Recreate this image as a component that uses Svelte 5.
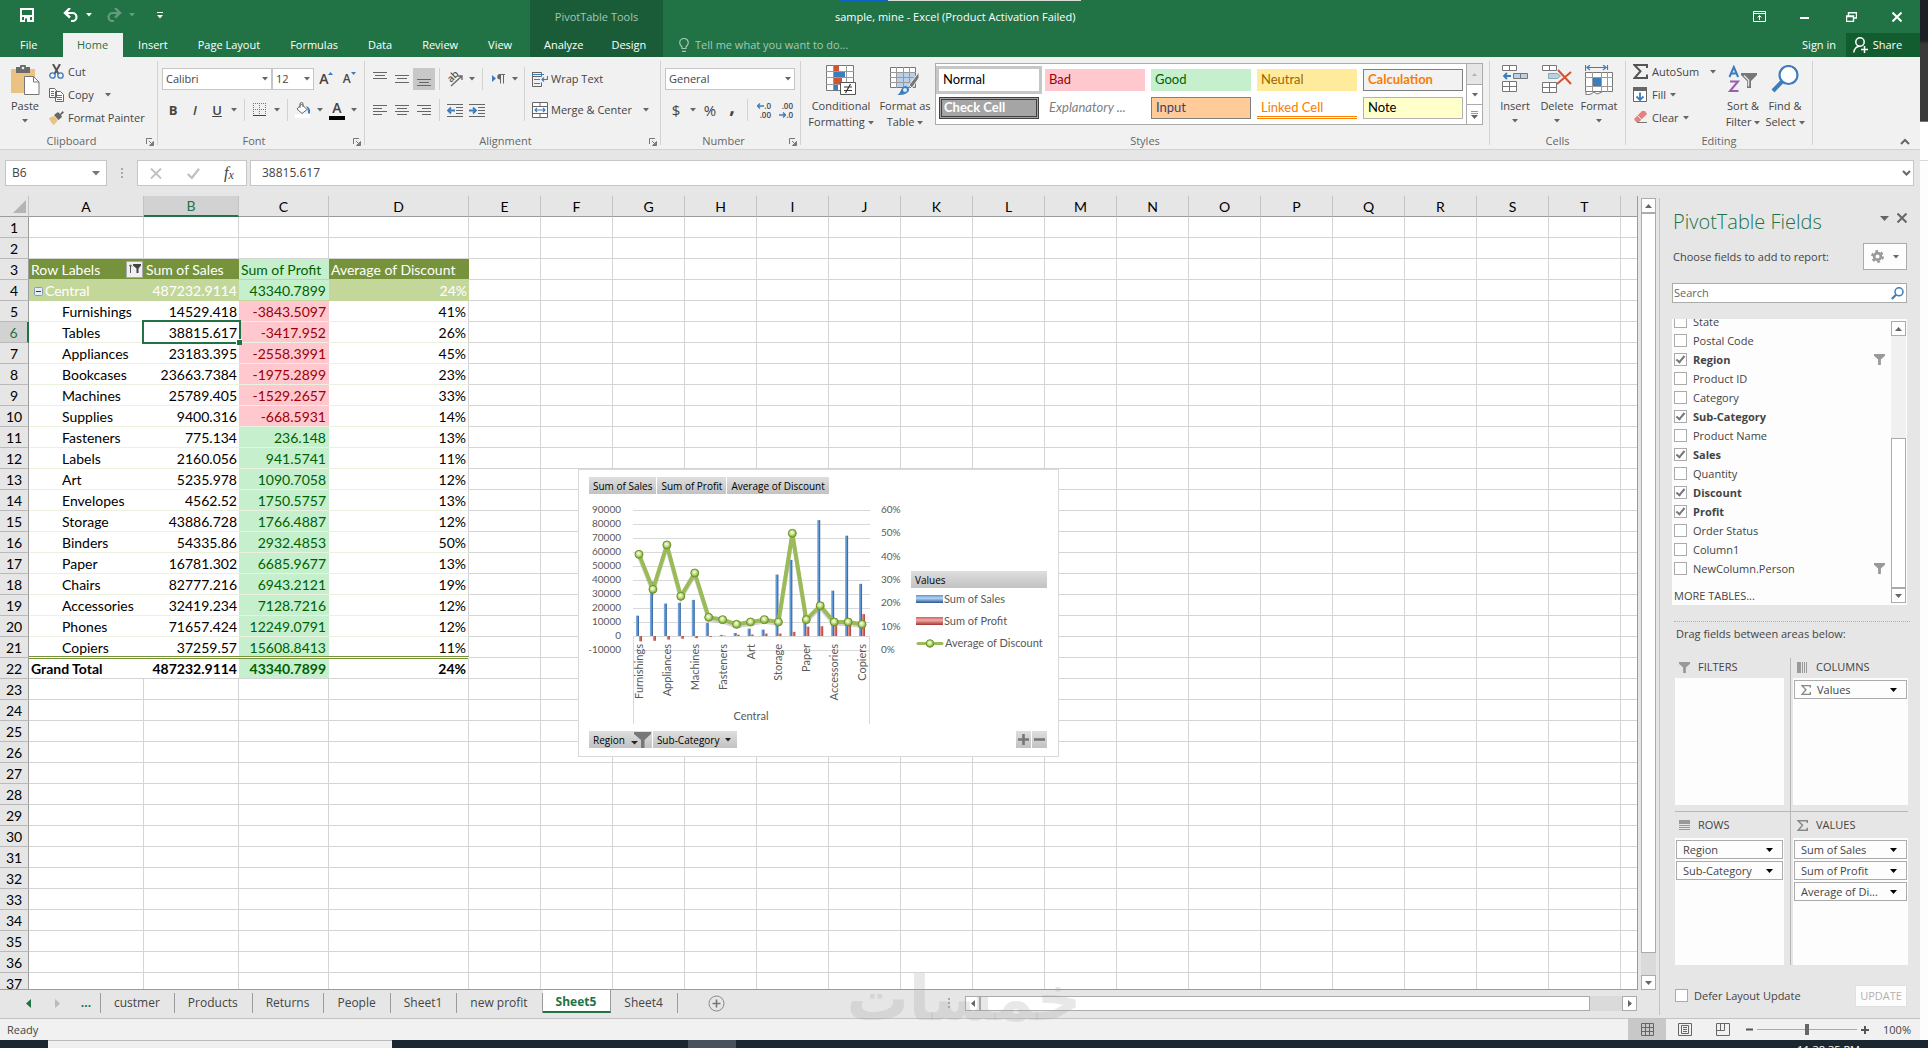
<script>
  let nameBox = $state('B6')
  let formula = $state('38815.617')
  let search = $state('')
  let tellMe = $state('')
  let zoom = $state(50)
  let defer = $state(false)
  let activeSheet = $state('Sheet5')

  const tabs = ['Home', 'Insert', 'Page Layout', 'Formulas', 'Data', 'Review', 'View']
  const sheets = ['custmer', 'Products', 'Returns', 'People', 'Sheet1', 'new profit', 'Sheet5', 'Sheet4']

  const columns = [
    { name: 'A', width: 115 },
    { name: 'B', width: 95 },
    { name: 'C', width: 90 },
    { name: 'D', width: 140 },
    ...'EFGHIJKLMNOPQRST'.split('').map(name => ({ name, width: 72 })),
    { name: '', width: 72 }
  ]
  const tableWidth = 29 + columns.reduce((sum, c) => sum + c.width, 0)
  const emptyColumns = columns.slice(4)

  const items = [
    { name: 'Furnishings', sales: 14529.418, profit: -3843.5097, discount: 41 },
    { name: 'Tables', sales: 38815.617, profit: -3417.952, discount: 26 },
    { name: 'Appliances', sales: 23183.395, profit: -2558.3991, discount: 45 },
    { name: 'Bookcases', sales: 23663.7384, profit: -1975.2899, discount: 23 },
    { name: 'Machines', sales: 25789.405, profit: -1529.2657, discount: 33 },
    { name: 'Supplies', sales: 9400.316, profit: -668.5931, discount: 14 },
    { name: 'Fasteners', sales: 775.134, profit: 236.148, discount: 13 },
    { name: 'Labels', sales: 2160.056, profit: 941.5741, discount: 11 },
    { name: 'Art', sales: 5235.978, profit: 1090.7058, discount: 12 },
    { name: 'Envelopes', sales: 4562.52, profit: 1750.5757, discount: 13 },
    { name: 'Storage', sales: 43886.728, profit: 1766.4887, discount: 12 },
    { name: 'Binders', sales: 54335.86, profit: 2932.4853, discount: 50 },
    { name: 'Paper', sales: 16781.302, profit: 6685.9677, discount: 13 },
    { name: 'Chairs', sales: 82777.216, profit: 6943.2121, discount: 19 },
    { name: 'Accessories', sales: 32419.234, profit: 7128.7216, discount: 12 },
    { name: 'Phones', sales: 71657.424, profit: 12249.0791, discount: 12 },
    { name: 'Copiers', sales: 37259.57, profit: 15608.8413, discount: 11 }
  ]

  const emptyRows = Array.from({ length: 15 }, (_, i) => i + 23)

  let fields = $state([
    { name: 'State', checked: false },
    { name: 'Postal Code', checked: false },
    { name: 'Region', checked: true, filter: true },
    { name: 'Product ID', checked: false },
    { name: 'Category', checked: false },
    { name: 'Sub-Category', checked: true },
    { name: 'Product Name', checked: false },
    { name: 'Sales', checked: true },
    { name: 'Quantity', checked: false },
    { name: 'Discount', checked: true },
    { name: 'Profit', checked: true },
    { name: 'Order Status', checked: false },
    { name: 'Column1', checked: false },
    { name: 'NewColumn.Person', checked: false, filter: true }
  ])

  const cellStyles = [
    ['Normal', 'normal'], ['Bad', 'bad'], ['Good', 'good'], ['Neutral', 'neutral'], ['Calculation', 'calc'],
    ['Check Cell', 'check'], ['Explanatory ...', 'expl'], ['Input', 'input'], ['Linked Cell', 'linked'], ['Note', 'note']
  ]

  // chart scales
  const cx = i => 61 + i * 13.94
  const ySales = v => 167 - (v / 10000) * 14
  const yDiscount = v => 181 - (v / 10) * 23.33
  const line = items.map((d, i) => `${cx(i)},${yDiscount(d.discount)}`).join(' ')
</script>

{#snippet caret()}
  <svg class="caret" width="6" height="4" viewBox="0 0 6 4"><path d="M0 0h6L3 3.6z" fill="currentColor" /></svg>
{/snippet}

{#snippet launcher()}
  <button class="launcher" aria-label="More options">
    <svg width="8" height="8" viewBox="0 0 8 8"><path d="M.5 6V.5H6M3 3l3 3M7.500 3.500v4h-4z" fill="none" stroke="#777" /><path d="M7.500 4v3.500H4z" fill="#777" /></svg>
  </button>
{/snippet}

{#snippet lines(rows)}
  <svg width="14" height="14" viewBox="0 0 14 14">
    {#each rows as r}<path d="M{r[1]} {r[0]}.5h{r[2]}" stroke="#666" />{/each}
  </svg>
{/snippet}

{#snippet funnel(w)}
  <svg width={w} height={w} viewBox="0 0 12 12"><path d="M0 0h12v2L7.500 6v6h-3V6L0 2z" fill="#999" /></svg>
{/snippet}

{#snippet sigma(w, color)}
  <svg width={w} height={w} viewBox="0 0 15 15"><path d="M14 4V1H1.500l6 6.200L1.500 14H14v-3.500" fill="none" stroke={color} stroke-width="2" /></svg>
{/snippet}

{#snippet area(label, list, kind)}
  <section class="area">
    <h3>
      {#if kind === 'filters'}{@render funnel(11)}
      {:else if kind === 'columns'}<svg width="11" height="11" viewBox="0 0 11 11"><path d="M0 0h4v11H0z" fill="#999" /><path d="M5.500 0v11M7.500 0v11M9.500 0v11" stroke="#999" /></svg>
      {:else if kind === 'rows'}<svg width="11" height="11" viewBox="0 0 11 11"><path d="M0 0h11v4H0z" fill="#999" /><path d="M0 5.500h11M0 7.500h11M0 9.500h11" stroke="#999" /></svg>
      {:else}{@render sigma(11, '#888')}{/if}
      {label}
    </h3>
    <div class="drop">
      {#each list as item}
        <button class="field">
          {#if kind === 'columns'}{@render sigma(10, '#888')}{/if}
          <span>{item}</span>
          <svg width="7" height="4" viewBox="0 0 7 4"><path d="M0 0h7L3.500 4z" fill="#000" /></svg>
        </button>
      {/each}
    </div>
  </section>
{/snippet}

<div class="screen">
  <div class="window">
    <header>
      <div class="head-left">
        <div class="qat">
          <button aria-label="Save"><svg width="14" height="14" viewBox="0 0 14 14"><path d="M1 1h12v12H1zM1.500 8h11" fill="none" stroke="#fff" stroke-width="2" /><path d="M4 9h6v5H4z" fill="#fff" /><path d="M5 10.500h2V14H5z" fill="#217346" /></svg></button>
          <button aria-label="Undo"><svg width="16" height="14" viewBox="0 0 16 14"><path d="M2 5h7.500a4 4 0 0 1 0 8H8" fill="none" stroke="#fff" stroke-width="2.200" /><path d="M7 0 2 5l5 4.500" fill="none" stroke="#fff" stroke-width="2.400" /></svg></button>
          <button class="light" aria-label="Undo list">{@render caret()}</button>
          <button class="faded" aria-label="Redo"><svg width="16" height="14" viewBox="0 0 16 14"><path d="M14 5H6.500a4 4 0 0 0 0 8H8" fill="none" stroke="#fff" stroke-width="2.200" /><path d="m9 0 5 5-5 4.500" fill="none" stroke="#fff" stroke-width="2.400" /></svg></button>
          <button class="light faded" aria-label="Redo list">{@render caret()}</button>
          <button class="light customize" aria-label="Customize toolbar"><svg width="6" height="7" viewBox="0 0 6 7"><path d="M0 .5h6" stroke="#fff" /><path d="M0 3h6L3 6.500z" fill="#fff" /></svg></button>
        </div>
        <nav class="tabs">
          <a class="file" href="#file">File</a>
          {#each tabs as tab}
            <a href="#{tab}" class:active={tab === 'Home'}>{tab}</a>
          {/each}
        </nav>
      </div>
      <div class="context">
        <p>PivotTable Tools</p>
        <nav class="tabs">
          <a href="#analyze">Analyze</a>
          <a href="#design">Design</a>
        </nav>
      </div>
      <div class="head-right">
        <div class="title-row">
          <h1>sample, mine - Excel (Product Activation Failed)</h1>
          <div class="loading"></div>
          <div class="win-buttons">
            <button aria-label="Ribbon display options"><svg width="13" height="11" viewBox="0 0 13 11"><path d="M.5.5h12v10H.5zM.5 2.500h12M6.500 9V4.500M4.500 6.500l2-2 2 2" fill="none" stroke="#fff" /></svg></button>
            <button aria-label="Minimize"><svg width="10" height="10" viewBox="0 0 10 10"><path d="M0 6h9" stroke="#fff" stroke-width="2" /></svg></button>
            <button aria-label="Restore"><svg width="11" height="10" viewBox="0 0 11 10"><path d="M.5 4h7v5.500h-7zM.5 4.500h7M2.500 4V.8h8V6H8" fill="none" stroke="#fff" stroke-width="1.400" /></svg></button>
            <button aria-label="Close"><svg width="10" height="10" viewBox="0 0 10 10"><path d="m.5.500 9 9m0-9-9 9" stroke="#fff" stroke-width="2" /></svg></button>
          </div>
        </div>
        <div class="tell-row">
          <label class="tell">
            <svg width="10" height="14" viewBox="0 0 10 14"><path d="M3 10.500V9C1.500 7.500.7 6.500.7 4.800a4.300 4.300 0 0 1 8.600 0C9.300 6.500 8.500 7.500 7 9v1.500zM3 13.300h4" fill="none" stroke="#a6c7b5" stroke-width="1.200" /></svg>
            <input bind:value={tellMe} placeholder="Tell me what you want to do..." aria-label="Tell me what you want to do" />
          </label>
          <a class="signin" href="#signin">Sign in</a>
          <button class="share"><svg width="15" height="16" viewBox="0 0 15 16"><circle cx="7" cy="5" r="4.200" fill="none" stroke="#fff" stroke-width="1.500" /><path d="M.8 15.500c.5-4 2.500-6 6-6.300M8 12.500h7M11.500 9v7" fill="none" stroke="#fff" stroke-width="1.500" /></svg>Share</button>
        </div>
      </div>
    </header>

    <div class="ribbon">
      <div class="group clipboard">
        <div class="body">
          <button class="big paste">
            <svg width="30" height="30" viewBox="0 0 30 30"><path d="M1 4h24v24H1z" fill="#eac282" /><path d="M6 2h4a3 3 0 0 1 6 0h4v6H6z" fill="#6a6a6a" /><circle cx="13" cy="3" r="1.300" fill="#f1f1f1" /><path d="M14.500 11.500h9l5.500 5.500v12.500H14.500z" fill="#fff" stroke="#777" /><path d="M23.500 11.500V17H29" fill="none" stroke="#777" /></svg>
            <span>Paste</span>{@render caret()}
          </button>
          <div class="stack">
            <button><svg width="15" height="15" viewBox="0 0 15 15"><path d="M4 0l5.500 10M11 0 5.500 10" stroke="#555" stroke-width="2" /><circle cx="3.500" cy="11.500" r="2.700" fill="none" stroke="#3e7dbb" stroke-width="1.300" /><circle cx="11.500" cy="11.500" r="2.700" fill="none" stroke="#3e7dbb" stroke-width="1.300" /></svg>Cut</button>
            <button><svg width="15" height="15" viewBox="0 0 15 15"><path d="M.5 1.500h5l2 2v7h-7zM6.500 4.500h5l3 3v7h-8z" fill="#fff" stroke="#666" /><path d="M2 4.500h3M2 6.500h3M2 8.500h3M8 8.500h5M8 10.500h5M8 12.500h5" stroke="#3e7dbb" /></svg>Copy<i></i>{@render caret()}</button>
            <button><svg width="15" height="15" viewBox="0 0 15 15"><path d="M0 8l5-2 4 4-4 5c-2-1-4-4-5-7z" fill="#eac282" /><path d="m5 5 4-3 2 2 2.500-3L15 2.500 12 5l1 2-3.500 3z" fill="#666" /></svg>Format Painter</button>
          </div>
        </div>
        <p>Clipboard</p>
        {@render launcher()}
      </div>

      <div class="group font">
        <div class="rows">
          <div class="row">
            <label class="combo wide"><select aria-label="Font"><option>Calibri</option></select>{@render caret()}</label>
            <label class="combo size"><select aria-label="Font size"><option>12</option></select>{@render caret()}</label>
            <button class="ib letter" aria-label="Increase font size">A<svg width="5" height="14" viewBox="0 0 5 14"><path d="M0 3h5L2.500 0z" fill="#3e7dbb" /></svg></button>
            <button class="ib letter less" aria-label="Decrease font size">A<svg width="5" height="14" viewBox="0 0 5 14"><path d="M0 0h5L2.500 3z" fill="#3e7dbb" /></svg></button>
          </div>
          <div class="row">
            <button class="ib b">B</button>
            <button class="ib i">I</button>
            <button class="ib u">U</button>
            <button class="drop-btn" aria-label="Underline styles">{@render caret()}</button>
            <span class="sep"></span>
            <button class="ib" aria-label="Borders"><svg width="14" height="14" viewBox="0 0 14 14"><path d="M.5 0v13M6.500 0v13M12.500 0v13M0 .5h13M0 6.500h13" stroke="#777" stroke-dasharray="1 1" /><path d="M0 12.500h13" stroke="#444" /></svg></button>
            <button class="drop-btn" aria-label="Border styles">{@render caret()}</button>
            <span class="sep"></span>
            <button class="ib" aria-label="Fill color"><svg width="16" height="16" viewBox="0 0 16 16"><path d="M6.500 2 12 7.500l-5 4L2 7z" fill="#fff" stroke="#666" /><path d="M5 6V2a1.500 1.500 0 0 1 3 0v3" fill="none" stroke="#666" /><path d="M11 4c3 1 4.500 3 4 7-.5 1-1.500 1-2 0 0-2 0-4-2-7z" fill="#3e7dbb" /><path d="M0 12h15v4H0z" fill="#fff" /></svg></button>
            <button class="drop-btn" aria-label="Fill colors">{@render caret()}</button>
            <button class="ib fontcolor" aria-label="Font color">A</button>
            <button class="drop-btn" aria-label="Font colors">{@render caret()}</button>
          </div>
        </div>
        <p>Font</p>
        {@render launcher()}
      </div>

      <div class="group alignment">
        <div class="body">
          <div class="rows">
            <div class="row">
              <button class="ib" aria-label="Top align">{@render lines([[0, 0, 14], [3, 2, 10], [6, 0, 14]])}</button>
              <button class="ib" aria-label="Middle align">{@render lines([[3, 0, 14], [6, 2, 10], [10, 0, 14]])}</button>
              <button class="ib on" aria-label="Bottom align">{@render lines([[7, 0, 14], [10, 2, 10], [13, 0, 14]])}</button>
              <span class="sep"></span>
              <button class="ib" aria-label="Orientation"><svg class="orient" width="16" height="16" viewBox="0 0 16 16"><path d="m4 15 11-10M15 9V5h-4" fill="none" stroke="#666" stroke-width="1.300" /><text transform="translate(4 12) rotate(-45)" font-size="10" font-weight="600" fill="#555">ab</text></svg></button>
              <button class="drop-btn" aria-label="Orientation options">{@render caret()}</button>
              <span class="sep"></span>
              <button class="ib" aria-label="Text direction"><svg width="13" height="10" viewBox="0 0 13 10"><path d="M0 1v7l4-3.500z" fill="#3e7dbb" /><path d="M8.500 5V9.500M11.500 1v8.500" stroke="#666" /><path d="M13 0H8a2.500 2.500 0 0 0 0 5.500h1V1h4z" fill="#666" /></svg></button>
              <button class="drop-btn" aria-label="Text direction options">{@render caret()}</button>
            </div>
            <div class="row">
              <button class="ib" aria-label="Align left">{@render lines([[2, 0, 14], [5, 0, 9], [8, 0, 14], [11, 0, 9]])}</button>
              <button class="ib" aria-label="Center">{@render lines([[2, 0, 14], [5, 2, 10], [8, 0, 14], [11, 2, 10]])}</button>
              <button class="ib" aria-label="Align right">{@render lines([[2, 0, 14], [5, 5, 9], [8, 0, 14], [11, 5, 9]])}</button>
              <span class="sep"></span>
              <button class="ib" aria-label="Decrease indent"><svg width="16" height="13" viewBox="0 0 16 13"><path d="M0 .5h16M9 3.500h7M9 6.500h7M9 9.500h7M0 12.500h16" stroke="#666" /><path d="M1 6.500h7M4 3.500l-3 3 3 3" fill="none" stroke="#3e7dbb" stroke-width="1.800" /></svg></button>
              <button class="ib" aria-label="Increase indent"><svg width="16" height="13" viewBox="0 0 16 13"><path d="M0 .5h16M9 3.500h7M9 6.500h7M9 9.500h7M0 12.500h16" stroke="#666" /><path d="M0 6.500h7M4 3.500l3 3-3 3" fill="none" stroke="#3e7dbb" stroke-width="1.800" /></svg></button>
            </div>
          </div>
          <div class="rows wrap">
            <div class="row">
              <button class="text-btn"><svg width="16" height="16" viewBox="0 0 16 16"><path d="M.5 1.500h9M.5 5.500h9v-4M.5 1v14.500h9v-4M.5 5.500" fill="none" stroke="#666" /><path d="M0 3.500h12M2 8.500h6M2 12.500h6M15.500 5v3.500H10M12 6.500l-2 2 2 2" fill="none" stroke="#3e7dbb" stroke-width="1.200" /></svg>Wrap Text</button>
            </div>
            <div class="row">
              <button class="text-btn"><svg width="16" height="16" viewBox="0 0 16 16"><path d="M.5.500h15v15H.5zM.5 4.500h15M.5 11.500h15M8 .5v4M8 11.500v4" fill="#fff" stroke="#666" /><path d="M3 8h10M5 6 3 8l2 2M11 6l2 2-2 2" fill="none" stroke="#3e7dbb" stroke-width="1.200" /></svg>Merge &amp; Center</button>
              <button class="drop-btn merge" aria-label="Merge options">{@render caret()}</button>
            </div>
          </div>
        </div>
        <p>Alignment</p>
        {@render launcher()}
      </div>

      <div class="group number">
        <div class="rows">
          <div class="row">
            <label class="combo format"><select aria-label="Number format"><option>General</option></select>{@render caret()}</label>
          </div>
          <div class="row">
            <button class="ib sign">$</button>
            <button class="drop-btn" aria-label="Currency formats">{@render caret()}</button>
            <button class="ib sign">%</button>
            <button class="ib sign comma">,</button>
            <span class="sep"></span>
            <button class="ib decimal" aria-label="Increase decimal"><span><svg width="7" height="6" viewBox="0 0 7 6"><path d="M0 3h7M3 .5.500 3 3 5.500" fill="none" stroke="#3e7dbb" stroke-width="1.300" /></svg>.0</span><span>.00</span></button>
            <button class="ib decimal" aria-label="Decrease decimal"><span>.00</span><span><svg width="7" height="6" viewBox="0 0 7 6"><path d="M0 3h7M4 .5 6.500 3 4 5.500" fill="none" stroke="#3e7dbb" stroke-width="1.300" /></svg>.0</span></button>
          </div>
        </div>
        <p>Number</p>
        {@render launcher()}
      </div>

      <div class="group styles">
        <div class="body">
          <button class="big cond">
            <svg width="30" height="30" viewBox="0 0 30 30"><path d="M.5.500h27v25H.5z" fill="#fff" stroke="#777" /><path d="M7.500 0v25M20.500 0v25M0 6.500h28M0 12.500h28M0 19.500h28" stroke="#999" /><path d="M8 1h5v5H8zM8 13h8v6H8z" fill="#d35230" /><path d="M8 7h11v5H8zM8 20h4v5H8z" fill="#3e7dbb" /><path d="M14.500 17.500h15v12h-15z" fill="#fff" stroke="#555" /><path d="M18 22h8M18 25.500h8M24.500 19l-5 9" stroke="#333" stroke-width="1.200" /></svg>
            <span>Conditional<br />Formatting {@render caret()}</span>
          </button>
          <button class="big table">
            <svg width="30" height="30" viewBox="0 0 30 30"><path d="M.5 2.500h25v20H.5z" fill="#fff" stroke="#777" /><path d="M7 8h18v14H7z" fill="#b9d0e8" /><path d="M6.500 2v21M13.500 2v21M19.500 2v21M0 7.500h26M0 12.500h26M0 17.500h26" stroke="#999" /><path d="M29 7v6l-7 10-3-3z" fill="#777" stroke="#f1f1f1" /><path d="M7 30c4-1 3-7 8-9 4 0 5 4 3 6-3 3-7 3-11 3z" fill="#3e7dbb" /><circle cx="15" cy="25" r="2" fill="#dce9f6" /></svg>
            <span>Format as<br />Table {@render caret()}</span>
          </button>
          <div class="gallery">
            <div class="swatches">
              {#each cellStyles as [label, kind]}
                <button class="swatch {kind}">{label}</button>
              {/each}
            </div>
            <div class="gallery-scroll">
              <button class="off" aria-label="Previous styles"><svg width="5" height="3" viewBox="0 0 5 3"><path d="M0 3h5L2.500 0z" fill="#b5b5b5" /></svg></button>
              <button aria-label="Next styles">{@render caret()}</button>
              <button aria-label="All styles"><svg width="7" height="8" viewBox="0 0 7 8"><path d="M0 .5h7M0 2.500h7" stroke="#999" /><path d="M0 4h7L3.500 8z" fill="#666" /></svg></button>
            </div>
          </div>
        </div>
        <p>Styles</p>
      </div>

      <div class="group cells">
        <div class="body">
          <button class="big">
            <svg width="28" height="30" viewBox="0 0 28 30"><path d="M1.500.500h14v5h-14zM8.500.500v5M1.500 16.500h14v10h-14zM8.500 16.500v10M1.500 21.500h14" fill="#fff" stroke="#777" /><path d="M12.500 8.500h14v5h-14zM19.500 8.500v5" fill="#b9d0e8" stroke="#777" /><path d="M3 11h7M6 8l-3 3 3 3" fill="none" stroke="#3e7dbb" stroke-width="1.800" /></svg>
            <span>Insert</span>{@render caret()}
          </button>
          <button class="big">
            <svg width="30" height="30" viewBox="0 0 30 30"><path d="M.5.500h14v5H.5zM7.500.500v5M.5 17.500h14v10H.5zM7.500 17.500v10M.5 22.500h14" fill="#fff" stroke="#777" /><path d="M6.500 8.500h9l3 2.500-3 2.500h-9z" fill="#b9d0e8" stroke="#8aa" /><path d="m16 5 13 14M29 7 15 19" stroke="#d35230" stroke-width="2" /></svg>
            <span>Delete</span>{@render caret()}
          </button>
          <button class="big">
            <svg width="28" height="30" viewBox="0 0 28 30"><path d="M.5 6v-6M22.500 0v5M2 2.500h19M5 0 2 2.500 5 5M18 0l3 2.500L18 5" fill="none" stroke="#3e7dbb" stroke-width="1.200" /><path d="M.5 7.500h27v19H.5z" fill="#fff" stroke="#777" /><path d="M7.500 7v20M16.500 7v20M22.500 7v20M0 12.500h28M0 21.500h28" stroke="#999" /><path d="M8 13h8v8H8z" fill="#3e7dbb" /><path d="M1 27v3l5-1 3-2 3 2 5-2" fill="#fff" stroke="#777" /></svg>
            <span>Format</span>{@render caret()}
          </button>
        </div>
        <p>Cells</p>
      </div>

      <div class="group editing">
        <div class="body">
          <div class="stack">
            <button>{@render sigma(15, '#555')}AutoSum<i></i>{@render caret()}</button>
            <button><svg width="15" height="15" viewBox="0 0 15 15"><path d="M.5.500h13v14H.5z" fill="#fff" stroke="#666" /><path d="M0 0h14v4H0z" fill="#666" /><path d="M7 5.500v7M3.500 9.500 7 13l3.500-3.500" fill="none" stroke="#3e7dbb" stroke-width="1.800" /></svg>Fill {@render caret()}</button>
            <button><svg width="15" height="15" viewBox="0 0 15 15"><path d="M1 9l8-8h3l2 3-8 8H3z" fill="#ec7f7c" /><path d="m4.500 5.500 5 5" stroke="#f1f1f1" /><path d="M4 12.500h10" stroke="#777" /></svg>Clear {@render caret()}</button>
          </div>
          <button class="big">
            <svg width="30" height="30" viewBox="0 0 30 30"><path d="M1.500 12 5.800 2l4.300 10M3 8.500h5.600" fill="none" stroke="#3e7dbb" stroke-width="2" /><path d="M2 16.500h8L2 26h8.500" fill="none" stroke="#9a5fb0" stroke-width="2" /><path d="M13 8h16v2l-6 6v7h-4v-7l-6-6z" fill="#777" /><path d="M16 10.500 20.500 15v6.500" fill="none" stroke="#ddd" stroke-width="1.500" /></svg>
            <span>Sort &amp;<br />Filter {@render caret()}</span>
          </button>
          <button class="big">
            <svg width="28" height="30" viewBox="0 0 28 30"><circle cx="17.500" cy="10" r="9" fill="#fff" stroke="#3e7dbb" stroke-width="2.200" /><path d="M11 16.500 2 26" stroke="#3e7dbb" stroke-width="4" /></svg>
            <span>Find &amp;<br />Select {@render caret()}</span>
          </button>
        </div>
        <p>Editing</p>
      </div>
      <button class="collapse" aria-label="Collapse the ribbon"><svg width="10" height="7" viewBox="0 0 10 7"><path d="m1 6 4-4 4 4" fill="none" stroke="#666" stroke-width="2" /></svg></button>
    </div>

    <div class="formula-bar">
      <label class="name-box"><input bind:value={nameBox} aria-label="Name box" /><svg width="8" height="5" viewBox="0 0 8 5"><path d="M0 0h8L4 4.500z" fill="#777" /></svg></label>
      <svg class="grip" width="2" height="11" viewBox="0 0 2 11"><path d="M0 0h2v2H0zM0 4h2v2H0zM0 8h2v2H0z" fill="#aaa" /></svg>
      <div class="fx-box">
        <button aria-label="Cancel"><svg width="12" height="11" viewBox="0 0 12 11"><path d="m1 .5 10 10m0-10-10 10" stroke="#c0c0c0" stroke-width="1.800" /></svg></button>
        <button aria-label="Enter"><svg width="13" height="11" viewBox="0 0 13 11"><path d="m.8 6 4 4L12 .8" fill="none" stroke="#c0c0c0" stroke-width="2.200" /></svg></button>
        <button class="fx" aria-label="Insert function">f<small>x</small></button>
      </div>
      <label class="formula"><input bind:value={formula} aria-label="Formula" /><svg width="9" height="7" viewBox="0 0 9 7"><path d="m1 1 3.500 3.500L8 1" fill="none" stroke="#666" stroke-width="2" /></svg></label>
    </div>

    <div class="main">
      <div class="book">
        <div class="sheet">
          <div class="viewport">
            <table style:width="{tableWidth}px">
              <colgroup>
                <col class="numbers" />
                {#each columns as column}<col style:width="{column.width}px" />{/each}
              </colgroup>
              <thead>
                <tr>
                  <th class="corner"><svg width="13" height="13" viewBox="0 0 13 13"><path d="M13 0v13H0z" fill="#b4b4b8" /></svg></th>
                  {#each columns as column}
                    <th class:selected={column.name === 'B'}>{column.name}</th>
                  {/each}
                </tr>
              </thead>
              <tbody>
                {#each [1, 2] as n}
                  <tr><th>{n}</th>{#each columns as _}<td></td>{/each}</tr>
                {/each}
                <tr class="labels">
                  <th>3</th>
                  <td><div class="row-labels">Row Labels<button class="filter" aria-label="Filter row labels"><svg width="12" height="10" viewBox="0 0 12 10"><path d="M1.500 9V1M0 2.500 1.500.800 3 2.500" fill="none" stroke="#555" /><path d="M4 0h8v1.500L9.500 4.500V9h-2V4.500L4 1.500z" fill="#444" /></svg></button></div></td>
                  <td>Sum of Sales</td>
                  <td class="up">Sum of Profit</td>
                  <td>Average of Discount</td>
                  {#each emptyColumns as _}<td></td>{/each}
                </tr>
                <tr class="region">
                  <th>4</th>
                  <td><button class="toggle" aria-label="Collapse Central"><svg width="9" height="9" viewBox="0 0 9 9"><rect x=".5" y=".5" width="8" height="8" rx="1" fill="#e8edf5" stroke="#8b9bb5" /><path d="M2 4.500h5" stroke="#2b3f6b" /></svg></button>Central</td>
                  <td class="num">487232.9114</td>
                  <td class="num up">43340.7899</td>
                  <td class="num">24%</td>
                  {#each emptyColumns as _}<td></td>{/each}
                </tr>
                {#each items as item, i}
                  <tr class="item">
                    <th class:selected={i === 1}>{i + 5}</th>
                    <td class="indent">{item.name}</td>
                    <td class="num" class:cursor={i === 1}>{item.sales}</td>
                    <td class="num" class:up={item.profit > 0} class:down={item.profit < 0}>{item.profit}</td>
                    <td class="num">{item.discount}%</td>
                    {#each emptyColumns as _}<td></td>{/each}
                  </tr>
                {/each}
                <tr class="total">
                  <th>22</th>
                  <td>Grand Total</td>
                  <td class="num">487232.9114</td>
                  <td class="num up">43340.7899</td>
                  <td class="num">24%</td>
                  {#each emptyColumns as _}<td></td>{/each}
                </tr>
                {#each emptyRows as n}
                  <tr><th>{n}</th>{#each columns as _}<td></td>{/each}</tr>
                {/each}
              </tbody>
            </table>

            <div class="chart">
              <div class="chart-row">
                <button>Sum of Sales</button>
                <button>Sum of Profit</button>
                <button>Average of Discount</button>
              </div>
              <div class="chart-body">
                <svg width="322" height="237" viewBox="11 25 322 237">
                  <defs>
                    <linearGradient id="blue"><stop offset="0" stop-color="#7db2e8" /><stop offset=".5" stop-color="#5b93d0" /><stop offset="1" stop-color="#2c5590" /></linearGradient>
                    <linearGradient id="red"><stop offset="0" stop-color="#f0938c" /><stop offset="1" stop-color="#a8403a" /></linearGradient>
                    <radialGradient id="dot" cx=".45" cy=".4"><stop offset="0" stop-color="#fbfff0" /><stop offset=".5" stop-color="#c9e58e" /><stop offset="1" stop-color="#86b040" /></radialGradient>
                  </defs>
                  {#each Array(11) as _, k}
                    <path d="M55 {41 + k * 14}.5h237" stroke="#d9d9d9" />
                    <text x="43" y={44 + k * 14} text-anchor="end">{90000 - k * 10000}</text>
                  {/each}
                  {#each [60, 50, 40, 30, 20, 10, 0] as p}
                    <text x="303" y={yDiscount(p) + 3}>{p}%</text>
                  {/each}
                  <path d="M55.500 168v87M291.500 168v87" stroke="#d9d9d9" />
                  {#each items as d, i}
                    <rect x={cx(i) - 3} y={ySales(d.sales)} width="3" height={167 - ySales(d.sales)} fill="url(#blue)" />
                    <rect x={cx(i)} y={Math.min(167, ySales(d.profit))} width="3" height={Math.abs(167 - ySales(d.profit))} fill="url(#red)" />
                  {/each}
                  <polyline points={line} fill="none" stroke="#6f6f6f" stroke-opacity=".3" stroke-width="4" transform="translate(0 2)" />
                  <polyline points={line} fill="none" stroke="#9bbb59" stroke-width="4" stroke-linejoin="round" />
                  {#each items as d, i}
                    <circle cx={cx(i)} cy={yDiscount(d.discount)} r="4" fill="url(#dot)" stroke="#6f9130" />
                    {#if i % 2 === 0}
                      <text class="name" transform="translate({cx(i) + 4} 175) rotate(-90)" text-anchor="end">{d.name}</text>
                    {/if}
                  {/each}
                  <text class="name" x="173" y="251" text-anchor="middle">Central</text>
                </svg>
                <div class="legend">
                  <button>Values</button>
                  <ul>
                    <li><span class="key sales"></span>Sum of Sales</li>
                    <li><span class="key profit"></span>Sum of Profit</li>
                    <li><svg width="28" height="9" viewBox="0 0 28 9"><path d="M2 4.500h24" stroke="#9bbb59" stroke-width="3" stroke-linecap="round" /><circle cx="14" cy="4.500" r="3.800" fill="url(#dot)" stroke="#6f9130" /></svg>Average of Discount</li>
                  </ul>
                </div>
              </div>
              <div class="chart-row">
                <button class="region-btn">Region<svg width="20" height="16" viewBox="0 0 20 16"><path d="M0 9h7L3.500 12.500z" fill="#222" /><path d="M3 0h17v2l-6.500 6v8H10V8L3 2z" fill="#777" /></svg></button>
                <button class="sub-btn">Sub-Category{@render caret()}</button>
                <button class="zoom-btn plus" aria-label="Expand field"><svg width="11" height="11" viewBox="0 0 11 11"><path d="M0 5.500h11M5.500 0v11" stroke="#777" stroke-width="2.600" /></svg></button>
                <button class="zoom-btn" aria-label="Collapse field"><svg width="11" height="11" viewBox="0 0 11 11"><path d="M0 5.500h11" stroke="#777" stroke-width="2.600" /></svg></button>
              </div>
            </div>
          </div>
          <div class="vscroll">
            <button aria-label="Scroll up"><svg width="7" height="4" viewBox="0 0 7 4"><path d="M0 4h7L3.500 0z" fill="#666" /></svg></button>
            <div class="thumb"></div>
            <button class="end" aria-label="Scroll down"><svg width="7" height="4" viewBox="0 0 7 4"><path d="M0 0h7L3.500 4z" fill="#666" /></svg></button>
          </div>
        </div>

        <div class="sheet-bar">
          <button class="nav" aria-label="Previous sheet"><svg width="5" height="9" viewBox="0 0 5 9"><path d="M5 0v9L0 4.500z" fill="#217346" /></svg></button>
          <button class="nav" aria-label="Next sheet"><svg width="5" height="9" viewBox="0 0 5 9"><path d="M0 0v9l5-4.500z" fill="#bbb" /></svg></button>
          <button class="more">...</button>
          {#each sheets as sheet}
            <button class="sheet-tab" class:active={sheet === activeSheet} onclick={() => activeSheet = sheet}>{sheet}</button>
          {/each}
          <button class="add" aria-label="New sheet"><svg width="17" height="17" viewBox="0 0 17 17"><circle cx="8.500" cy="8.500" r="7.500" fill="none" stroke="#888" /><path d="M4.500 8.500h8M8.500 4.500v8" stroke="#777" stroke-width="1.600" /></svg></button>
          <svg class="grip" width="2" height="11" viewBox="0 0 2 11"><path d="M0 0h2v2H0zM0 4h2v2H0zM0 8h2v2H0z" fill="#aaa" /></svg>
          <div class="hscroll">
            <button aria-label="Scroll left"><svg width="4" height="7" viewBox="0 0 4 7"><path d="M4 0v7L0 3.500z" fill="#666" /></svg></button>
            <div class="thumb"></div>
            <button class="end" aria-label="Scroll right"><svg width="4" height="7" viewBox="0 0 4 7"><path d="M0 0v7l4-3.500z" fill="#666" /></svg></button>
          </div>
        </div>
      </div>

      <aside>
        <div class="pane-title">
          <h2>PivotTable Fields</h2>
          <button aria-label="Pane options"><svg width="9" height="5" viewBox="0 0 9 5"><path d="M0 0h9L4.500 5z" fill="#666" /></svg></button>
          <button aria-label="Close pane"><svg width="10" height="10" viewBox="0 0 10 10"><path d="m.5.500 9 9m0-9-9 9" stroke="#666" stroke-width="2" /></svg></button>
        </div>
        <div class="choose">
          Choose fields to add to report:
          <button aria-label="Tools"><svg width="13" height="13" viewBox="0 0 13 13"><circle cx="6.500" cy="6.500" r="3.400" fill="none" stroke="#999" stroke-width="2.600" /><circle cx="6.500" cy="6.500" r="5.400" fill="none" stroke="#999" stroke-width="2" stroke-dasharray="2.800 2.850" /></svg>{@render caret()}</button>
        </div>
        <label class="search">
          <input bind:value={search} placeholder="Search" aria-label="Search fields" />
          <svg width="13" height="13" viewBox="0 0 13 13"><circle cx="8" cy="4.800" r="4" fill="none" stroke="#3e7dbb" stroke-width="1.500" /><path d="M5 7.800.8 12" stroke="#3e7dbb" stroke-width="2.200" /></svg>
        </label>
        <div class="field-list">
          <div class="fields">
            {#each fields as field}
              <label class:checked={field.checked}>
                <input type="checkbox" bind:checked={field.checked} />
                <span>{field.name}</span>
                {#if field.filter}{@render funnel(11)}{/if}
              </label>
            {/each}
            <a href="#tables">MORE TABLES...</a>
          </div>
          <div class="list-scroll">
            <button aria-label="Scroll list up"><svg width="7" height="4" viewBox="0 0 7 4"><path d="M0 4h7L3.500 0z" fill="#666" /></svg></button>
            <div class="thumb"></div>
            <button aria-label="Scroll list down"><svg width="7" height="4" viewBox="0 0 7 4"><path d="M0 0h7L3.500 4z" fill="#666" /></svg></button>
          </div>
        </div>
        <p class="drag">Drag fields between areas below:</p>
        <div class="areas">
          {@render area('FILTERS', [], 'filters')}
          {@render area('COLUMNS', ['Values'], 'columns')}
          {@render area('ROWS', ['Region', 'Sub-Category'], 'rows')}
          {@render area('VALUES', ['Sum of Sales', 'Sum of Profit', 'Average of Di...'], 'values')}
        </div>
        <div class="defer">
          <label><input type="checkbox" bind:checked={defer} /> Defer Layout Update</label>
          <button disabled>UPDATE</button>
        </div>
      </aside>
    </div>

    <footer>
      <span>Ready</span>
      <button class="view on" aria-label="Normal view"><svg width="13" height="13" viewBox="0 0 13 13"><path d="M.5.500h12v12H.5zM4.500.500v12M8.500.500v12M.5 4.500h12M.5 8.500h12" fill="none" stroke="#666" /></svg></button>
      <button class="view" aria-label="Page layout view"><svg width="14" height="13" viewBox="0 0 14 13"><path d="M.5.500h13v12H.5zM3.500 2.500h7v8h-7zM5 4.500h4M5 6.500h4M5 8.500h4" fill="none" stroke="#666" /></svg></button>
      <button class="view" aria-label="Page break view"><svg width="14" height="13" viewBox="0 0 14 13"><path d="M.5.500h13v12H.5zM.5 7.500h8v-7M4.500.500v7" fill="none" stroke="#666" /></svg></button>
      <button class="step" aria-label="Zoom out"><svg width="7" height="7" viewBox="0 0 7 7"><path d="M0 3.500h7" stroke="#555" stroke-width="2" /></svg></button>
      <input type="range" bind:value={zoom} aria-label="Zoom" />
      <button class="step" aria-label="Zoom in"><svg width="8" height="8" viewBox="0 0 8 8"><path d="M0 4h8M4 0v8" stroke="#555" stroke-width="2" /></svg></button>
      <span class="percent">100%</span>
    </footer>
    <div class="watermark" lang="ar" dir="rtl">خمسات</div>
  </div>
  <div class="behind"></div>
  <div class="taskbar">
    <div class="task-search"></div>
    <div class="task-active"></div>
    <time>11:38:35 PM</time>
  </div>
</div>

<style>
  :global(body) {
    background: #fdfdfd;
  }

  .screen {
    display: grid;
    grid-template-columns: 1fr 8px;
    grid-template-rows: 1fr 8px;
    height: 100vh;
    overflow: hidden;
    font: 11px/16px "Open Sans", "Noto Sans", sans-serif;
    color: #444;
  }

  .window {
    position: relative;
    display: flex;
    flex-direction: column;
    min-width: 0;
    min-height: 0;
    background: #e6e6e6;
  }

  h1, h2, h3, p, ul {
    margin: 0;
    padding: 0;
    font-weight: 400;
  }

  button, input, select {
    margin: 0;
    padding: 0;
    border: 0;
    background: none;
    font: inherit;
    color: inherit;
    border-radius: 0;
    outline: none;
    box-sizing: border-box;
  }

  button {
    display: flex;
    align-items: center;
    justify-content: center;
  }

  a {
    color: inherit;
    text-decoration: none;
  }

  svg {
    flex: none;
    display: block;
  }

  svg.caret {
    display: inline-block;
    vertical-align: middle;
    color: #666;
  }

  /* title bar and ribbon tabs */
  header {
    display: flex;
    height: 57px;
    background: #217346;
    color: #fff;
    font-size: 11px;
  }

  .qat {
    display: flex;
    align-items: center;
    height: 33px;
    padding: 0 0 3px 20px;
    box-sizing: border-box;
  }

  .qat button:nth-child(2) {
    margin-left: 29px;
  }

  .qat button:nth-child(3), .qat button:nth-child(5) {
    margin-left: 7px;
  }

  .qat button:nth-child(4) {
    margin-left: 14px;
  }

  .qat .customize {
    margin-left: 22px;
  }

  .light svg {
    color: #fff;
  }

  .faded {
    opacity: .3;
  }

  .tabs {
    display: flex;
    height: 24px;
  }

  .tabs a {
    display: flex;
    align-items: center;
    padding: 0 15px;
    white-space: nowrap;
  }

  .tabs .file {
    width: 63px;
    padding: 0 0 0 20px;
    box-sizing: border-box;
  }

  .tabs .active {
    padding: 0 15px 0 14px;
    background: #f1f1f1;
    color: #217346;
  }

  .head-left {
    width: 530px;
  }

  .context {
    width: 133px;
    background: #1b5c38;
  }

  .context p {
    height: 33px;
    line-height: 33px;
    text-align: center;
    color: #a6c7b5;
  }

  .context .tabs a {
    padding: 0 14px;
  }

  .head-right {
    flex: 1;
    min-width: 0;
  }

  .title-row, .tell-row {
    display: flex;
    align-items: center;
  }

  .title-row {
    position: relative;
    height: 33px;
  }

  .title-row h1 {
    flex: 1;
    padding-left: 172px;
    font-size: 11px;
    white-space: nowrap;
  }

  .loading {
    position: absolute;
    top: 0;
    left: 177px;
    width: 241px;
    height: 1px;
    background: linear-gradient(90deg, #0b62c4 48px, #d8dcd9 48px);
  }

  .win-buttons {
    display: flex;
    height: 31px;
  }

  .win-buttons button {
    width: 46px;
  }

  .tell-row {
    height: 24px;
  }

  .tell {
    display: flex;
    flex: 1;
    align-items: center;
    gap: 6px;
    padding-left: 16px;
  }

  .tell input {
    width: 200px;
  }

  .tell input::placeholder {
    color: #a6c7b5;
    opacity: 1;
  }

  .signin {
    padding-right: 10px;
  }

  .share {
    gap: 5px;
    width: 74px;
    height: 24px;
    padding-right: 11px;
    background: #125c2f;
  }

  /* ribbon */
  .ribbon {
    display: flex;
    height: 93px;
    box-sizing: border-box;
    border-bottom: 1px solid #d2d2d2;
    background: #f1f1f1;
  }

  .group {
    position: relative;
    flex: none;
    display: flex;
    flex-direction: column;
    box-sizing: border-box;
    padding: 0 5px 0 4px;
    background: linear-gradient(#d2d2d2, #d2d2d2) right 4px / 1px 84px no-repeat;
  }

  .group > p {
    margin-top: auto;
    padding-right: 14px;
    text-align: center;
    color: #666;
  }

  .styles > p, .cells > p, .editing > p {
    padding-right: 0;
  }

  .clipboard { width: 158px; }
  .font { width: 207px; }
  .alignment { width: 296px; }
  .number { width: 140px; }
  .styles { width: 689px; }
  .cells { width: 136px; }
  .editing { width: 187px; }

  .launcher {
    position: absolute;
    right: 4px;
    bottom: 3px;
  }

  .body {
    display: flex;
  }

  .rows {
    display: flex;
    flex-direction: column;
    gap: 9px;
    padding-top: 11px;
  }

  .row {
    display: flex;
    height: 22px;
    align-items: center;
  }

  .ib {
    width: 22px;
    height: 22px;
    font-size: 13px;
  }

  .on {
    background: #c8c8c8;
  }

  .drop-btn {
    width: 12px;
    height: 22px;
  }

  .sep {
    width: 1px;
    height: 22px;
    margin: 0 4px;
    background: #d2d2d2;
  }

  .b { font-weight: 700; }
  .i { font-style: italic; font-weight: 600; }
  .u { text-decoration: underline; font-weight: 600; }

  .letter {
    font-size: 14px;
    font-weight: 600;
    margin-left: 1px;
  }

  .less {
    font-size: 12px;
  }

  .letter svg {
    align-self: flex-start;
    margin-top: 4px;
  }

  .orient {
    overflow: visible;
  }

  .fontcolor {
    font-size: 14px;
    font-weight: 600;
    line-height: 14px;
    background: linear-gradient(#000, #000) center 17px / 16px 4px no-repeat;
    padding-bottom: 4px;
  }

  .combo {
    position: relative;
    height: 22px;
  }

  .combo select {
    appearance: none;
    width: 100%;
    height: 22px;
    padding-left: 3px;
    border: 1px solid #c6c6c6;
    background: #fff;
  }

  .combo svg {
    position: absolute;
    right: 4px;
    top: 9px;
    pointer-events: none;
  }

  .wide { width: 111px; }
  .size { width: 43px; }
  .format { width: 130px; }

  .wrap {
    margin: 10px 0 0 3px;
    padding: 1px 0 0 7px;
    border-left: 1px solid #d2d2d2;
  }

  .text-btn {
    gap: 3px;
    white-space: nowrap;
  }

  .merge {
    margin-left: 8px;
  }

  .sign {
    font-size: 15px;
  }

  .comma {
    padding-bottom: 8px;
    font-size: 20px;
    font-weight: 700;
  }

  .decimal {
    flex-direction: column;
    font-size: 8px;
    line-height: 9px;
    font-weight: 600;
  }

  .decimal span {
    display: flex;
    align-items: center;
    justify-content: flex-end;
    width: 16px;
  }

  .big {
    flex-direction: column;
    justify-content: flex-start;
    width: 42px;
    padding-top: 8px;
    white-space: nowrap;
  }

  .big span {
    margin-top: 3px;
  }

  .big > .caret {
    margin-top: 5px;
  }

  .cond { width: 72px; }
  .table { width: 56px; }

  .stack {
    padding-top: 3px;
  }

  .stack button {
    gap: 4px;
    height: 23px;
    white-space: nowrap;
  }

  .stack i {
    width: 3px;
  }

  .clipboard .stack {
    margin-left: 3px;
  }

  .editing .stack {
    width: 89px;
    margin-left: 3px;
  }

  .gallery {
    display: flex;
    height: 62px;
    margin: 6px 0 0 2px;
    box-sizing: border-box;
    border: 1px solid #ababab;
    background: #fff;
  }

  .swatches {
    display: grid;
    grid-template-columns: repeat(5, 100px);
    grid-template-rows: 22px 22px;
    gap: 6px;
    padding: 5px 3px;
  }

  .swatch {
    justify-content: flex-start;
    padding: 0 0 2px 4px;
    font: 13px/16px Lato, sans-serif;
    color: #000;
  }

  .normal { outline: 3px solid #c6c6c6; }
  .bad { background: #ffc7ce; color: #9c0006; }
  .good { background: #c6efce; color: #006100; }
  .neutral { background: #ffeb9c; color: #9c6500; }
  .calc { border: 1px solid #7f7f7f; background: #f2f2f2; color: #fa7d00; font-weight: 700; }
  .check { border: 3px double #3f3f3f; background: #a5a5a5; color: #fff; font-weight: 700; padding-left: 2px; }
  .expl { color: #7f7f7f; font-style: italic; }
  .input { border: 1px solid #7f7f7f; background: #ffcc99; color: #3f3f76; }
  .linked { padding-bottom: 0; border-bottom: 3px double #ff8001; color: #fa7d00; }
  .note { border: 1px solid #b2b2b2; background: #ffffcc; }

  .gallery-scroll {
    display: grid;
    grid-template-rows: 1fr 1fr 1fr;
    width: 15px;
    border-left: 1px solid #ababab;
  }

  .gallery-scroll button + button {
    border-top: 1px solid #ababab;
  }

  .off {
    background: #e6e6e6;
  }

  .collapse {
    margin: auto 10px 4px auto;
  }

  /* formula bar */
  .formula-bar {
    display: flex;
    height: 46px;
    padding: 10px 6px 10px 5px;
    box-sizing: border-box;
    font-size: 12px;
  }

  .formula-bar label, .fx-box {
    display: flex;
    align-items: center;
    box-sizing: border-box;
    border: 1px solid #c6c6c6;
    background: #fff;
  }

  .formula-bar input {
    flex: 1;
    min-width: 0;
  }

  .name-box {
    width: 102px;
    padding: 0 6px;
  }

  .grip {
    margin: 8px 14px;
  }

  .fx-box {
    width: 110px;
    justify-content: space-around;
    margin-right: 3px;
  }

  .fx {
    font: italic 16px/18px "Liberation Serif", serif;
  }

  .fx small {
    font-size: 12px;
    padding-top: 4px;
  }

  .formula {
    flex: 1;
    padding: 0 2px 0 11px;
  }

  /* spreadsheet */
  .main {
    flex: 1;
    display: flex;
    min-height: 0;
    border-bottom: 1px solid #c3c3c3;
  }

  .book {
    flex: 1;
    display: flex;
    flex-direction: column;
    min-width: 0;
  }

  .sheet {
    flex: 1;
    display: flex;
    min-height: 0;
  }

  .viewport {
    position: relative;
    flex: 1;
    min-width: 0;
    overflow: hidden;
    border-bottom: 1px solid #9b9b9b;
    border-right: 1px solid #9b9b9b;
  }

  table {
    table-layout: fixed;
    border-spacing: 0;
    font: 14px/18px Lato, sans-serif;
    color: #000;
  }

  .numbers {
    width: 29px;
  }

  th, td {
    height: 21px;
    padding: 1px 2px 0;
    box-sizing: border-box;
    white-space: nowrap;
    font-weight: 400;
    vertical-align: middle;
  }

  th {
    border-right: 1px solid #9b9b9b;
    border-bottom: 1px solid #bababa;
    background: #e6e6e6;
    text-align: center;
  }

  thead th {
    border-right-color: #c3c3c3;
    border-bottom-color: #9b9b9b;
  }

  .corner svg {
    margin-left: auto;
  }

  td {
    border-right: 1px solid #d4d4d4;
    border-bottom: 1px solid #d4d4d4;
    background: #fff;
  }

  thead .selected {
    border-bottom: 2px solid #217346;
    background: #d2d2d2;
    color: #217346;
  }

  tbody .selected {
    border-right: 2px solid #217346;
    background: #d2d2d2;
    color: #217346;
  }

  .num {
    text-align: right;
  }

  td.indent {
    padding-left: 33px;
  }

  .labels td:nth-child(-n+5), .region td:nth-child(-n+5) {
    border-right: 0;
    color: #fff;
  }

  .labels td:nth-child(-n+5) {
    border-bottom-color: #c4d79b;
    background: #76933c;
  }

  .region td:nth-child(-n+5) {
    border-bottom-color: #c4d79b;
    background: #c4d79b;
  }

  .item td:nth-child(-n+5) {
    border-bottom-color: #ebf1de;
  }

  .item td:nth-child(-n+4), .total td:nth-child(-n+4) {
    border-right: 0;
  }

  .total td:nth-child(-n+5) {
    font-weight: 700;
    box-shadow: 0 -1px #fff, 0 -2px #76933c, inset 0 1px #76933c;
  }

  tbody td.up:nth-child(4) {
    padding-right: 3px;
    background: #c6efce;
    color: #006100;
  }

  tbody td.down {
    padding-right: 3px;
    background: #ffc7ce;
    color: #9c0006;
  }

  .cursor {
    position: relative;
  }

  .cursor::before {
    content: "";
    position: absolute;
    inset: -2px;
    border: 2px solid #217346;
    z-index: 1;
  }

  .cursor::after {
    content: "";
    position: absolute;
    right: -3px;
    bottom: -3px;
    width: 5px;
    height: 5px;
    border: 1px solid #fff;
    border-width: 1px 0 0 1px;
    background: #217346;
    z-index: 2;
  }

  .row-labels {
    display: flex;
    justify-content: space-between;
  }

  .filter {
    width: 17px;
    height: 17px;
    margin-right: -1px;
    border: 1px solid #aaa;
    background: #f0f0f0;
  }

  .toggle {
    display: inline-flex;
    margin: 0 2px 0 3px;
  }

  .vscroll {
    display: flex;
    flex-direction: column;
    width: 15px;
    margin: 2px 3px 0 3px;
    background: #dadada;
  }

  .vscroll button, .hscroll button, .list-scroll button {
    flex: none;
    width: 15px;
    height: 15px;
    border: 1px solid #ababab;
    background: #fff;
  }

  .thumb {
    box-sizing: border-box;
    border: 1px solid #ababab;
    background: #fff;
  }

  .vscroll .thumb {
    flex: 1;
    margin-bottom: 22px;
  }

  /* sheet tabs */
  .sheet-bar {
    display: flex;
    height: 28px;
    padding-right: 22px;
    font-size: 12px;
  }

  .nav {
    width: 29px;
    height: 26px;
  }

  .nav:first-child {
    margin-left: 14px;
  }

  .more {
    width: 28px;
    height: 26px;
    font-weight: 700;
    color: #217346;
  }

  .sheet-tab {
    height: 20px;
    margin-top: 3px;
    padding: 0 14px 0 13px;
    border-right: 1px solid #9b9b9b;
    white-space: nowrap;
  }

  .more + .sheet-tab {
    border-left: 1px solid #9b9b9b;
  }

  .sheet-tab.active {
    height: 24px;
    margin-top: -1px;
    padding-top: 4px;
    border-bottom: 2px solid #217346;
    background: #fff;
    color: #217346;
    font-weight: 700;
  }

  .add {
    height: 26px;
    margin-left: 30px;
  }

  .sheet-bar .grip {
    margin: 8px 15px 0 auto;
  }

  .hscroll {
    display: flex;
    flex: 0 1 672px;
    height: 15px;
    margin-top: 6px;
    background: #dadada;
  }

  .hscroll .thumb {
    flex: 1;
    margin-right: 32px;
  }

  /* fields pane */
  aside {
    display: flex;
    flex-direction: column;
    width: 248px;
    box-sizing: border-box;
    margin: 2px 13px 3px 0;
    padding-left: 12px;
    border-left: 1px solid #c3c3c3;
  }

  .pane-title {
    display: flex;
    align-items: flex-start;
    gap: 8px;
    height: 45px;
    padding-top: 10px;
    box-sizing: border-box;
  }

  .pane-title h2 {
    flex: 1;
    padding-left: 1px;
    font-size: 20px;
    line-height: 28px;
    font-weight: 300;
    color: #217346;
  }

  .pane-title button {
    height: 20px;
  }

  .choose {
    display: flex;
    align-items: center;
    justify-content: space-between;
    height: 27px;
    padding-left: 1px;
    white-space: nowrap;
  }

  .choose button {
    gap: 9px;
    width: 44px;
    height: 27px;
    border: 1px solid #ababab;
    background: #fdfdfd;
  }

  .search {
    display: flex;
    align-items: center;
    height: 20px;
    box-sizing: border-box;
    margin: 13px 0 16px;
    padding: 0 2px 0 1px;
    border: 1px solid #ababab;
    background: #fff;
  }

  .search input {
    flex: 1;
    min-width: 0;
  }

  .search input::placeholder {
    color: #666;
    opacity: 1;
  }

  .field-list {
    display: flex;
    flex: 1;
    min-height: 0;
    background: #fdfdfd;
  }

  .fields {
    flex: 1;
    display: flex;
    flex-direction: column;
    justify-content: flex-end;
    overflow: hidden;
    padding: 0 5px 1px 2px;
  }

  .fields label {
    flex: none;
    display: flex;
    align-items: center;
    height: 19px;
    gap: 6px;
  }

  .fields span {
    flex: 1;
  }

  .checked {
    font-weight: 700;
  }

  .fields a {
    height: 19px;
    margin-top: 10px;
  }

  input[type=checkbox] {
    appearance: none;
    display: flex;
    justify-content: center;
    width: 13px;
    height: 13px;
    border: 1px solid #ababab;
    background: #fff;
  }

  input[type=checkbox]:checked::after {
    content: "";
    width: 3px;
    height: 7px;
    border: solid #777;
    border-width: 0 2px 2px 0;
    transform: rotate(40deg);
  }

  .list-scroll {
    display: flex;
    flex-direction: column;
    width: 15px;
    margin: 2px 1px;
    background: #f0f0f0;
  }

  .list-scroll .thumb {
    height: 150px;
    margin-top: auto;
  }

  .drag {
    margin: 16px -3px 0 2px;
    padding: 4px 0 16px 2px;
    border-top: 1px dotted #b0b0b0;
  }

  .areas {
    display: grid;
    grid-template-columns: 116px 1fr;
    margin: 0 -1px 0 3px;
  }

  .area:nth-child(odd) {
    padding-right: 6px;
    border-right: 1px solid #b8b8b8;
  }

  .area:nth-child(even) {
    padding-left: 2px;
  }

  .area:nth-child(-n+2) {
    padding-bottom: 6px;
    border-bottom: 1px solid #b8b8b8;
  }

  .area h3 {
    display: flex;
    align-items: center;
    gap: 8px;
    height: 26px;
    padding-left: 4px;
    font-size: 11px;
  }

  .area:nth-child(-n+2) h3 {
    height: 18px;
    padding-bottom: 2px;
  }

  .drop {
    display: flex;
    flex-direction: column;
    gap: 2px;
    height: 123px;
    padding: 2px 1px;
    background: #fdfdfd;
  }

  .field {
    gap: 6px;
    height: 19px;
    padding: 0 9px 0 6px;
    border: 1px solid #ababab;
    white-space: nowrap;
  }

  .field span {
    flex: 1;
    text-align: left;
  }

  .defer {
    display: flex;
    justify-content: space-between;
    align-items: center;
    height: 21px;
    margin: 20px 0 9px 3px;
  }

  .defer label {
    display: flex;
    align-items: center;
    gap: 6px;
  }

  .defer button {
    width: 52px;
    height: 22px;
    border: 1px solid #e0e0e0;
    background: #fdfdfd;
    color: #b1b1b1;
  }

  /* chart */
  .chart {
    position: absolute;
    left: 578px;
    top: 273px;
    width: 481px;
    box-sizing: border-box;
    padding: 7px 11px 8px 10px;
    border: 1px solid #d9d9d9;
    background: #fff;
    font: 10px/14px Lato, sans-serif;
    color: #595959;
  }

  .chart text {
    fill: #595959;
  }

  .chart .name {
    font-size: 11px;
  }

  .chart-row {
    display: flex;
    gap: 1px;
  }

  .chart button {
    height: 17px;
    padding: 0 4px;
    background: linear-gradient(#dedede, #c2c2c2);
    color: #000;
    font: 10px/16px "Open Sans", sans-serif;
    white-space: nowrap;
  }

  .chart-body {
    display: flex;
    height: 237px;
  }

  .legend {
    flex: 1;
    padding-top: 77px;
    font-size: 11px;
  }

  .legend button {
    width: 100%;
    justify-content: flex-start;
  }

  .legend ul {
    list-style: none;
    padding-left: 5px;
  }

  .legend li {
    display: flex;
    align-items: center;
    gap: 1px;
    height: 22px;
    white-space: nowrap;
  }

  .key {
    width: 27px;
    height: 8px;
  }

  .key.sales {
    background: linear-gradient(#5b93d0, #b5d5f5 40%, #2c5590);
  }

  .key.profit {
    background: linear-gradient(#d4605a, #f5aaa5 40%, #9c3833);
  }

  .chart .region-btn {
    gap: 6px;
    padding-right: 1px;
  }

  .chart .sub-btn {
    gap: 6px;
    padding-right: 6px;
  }

  .sub-btn svg {
    color: #222;
  }

  .chart .zoom-btn {
    width: 15px;
    padding: 0;
  }

  .plus {
    margin-left: auto;
  }

  /* status bar */
  footer {
    display: flex;
    align-items: center;
    height: 21px;
    padding: 0 9px 0 7px;
    background: #f1f1f1;
    font-size: 11px;
  }

  footer span:first-child {
    flex: 1;
  }

  .view {
    width: 38px;
    height: 21px;
  }

  .step {
    width: 15px;
  }

  input[type=range] {
    appearance: none;
    width: 100px;
    height: 12px;
    background: linear-gradient(#aaa, #aaa) center / 100% 1px no-repeat;
  }

  input[type=range]::-webkit-slider-thumb {
    appearance: none;
    width: 4px;
    height: 11px;
    background: #666;
  }

  .percent {
    width: 39px;
    text-align: right;
  }

  .watermark {
    position: absolute;
    left: 846px;
    bottom: 9px;
    width: 236px;
    text-align: center;
    font: 700 62px/64px "DejaVu Sans", sans-serif;
    color: rgba(160, 165, 160, .25);
    pointer-events: none;
  }

  /* desktop behind the window */
  .behind {
    background: linear-gradient(#1b1f26 40px, #3a3a3a 44px 121px, #d35230 121px 122px, #fff 122px 160px, #d8d8d8 160px 161px, #fdfdfd 161px);
  }

  .taskbar {
    grid-column: 1 / 3;
    display: flex;
    overflow: hidden;
    background: #1a2731;
  }

  .task-search {
    width: 344px;
    margin-left: 48px;
    background: #f0f0f0;
    border-top: 1px solid #bbb;
  }

  .task-active {
    width: 48px;
    margin-left: 296px;
    background: #47525c;
  }

  time {
    margin: 2px 68px 0 auto;
    color: #fff;
  }
</style>
